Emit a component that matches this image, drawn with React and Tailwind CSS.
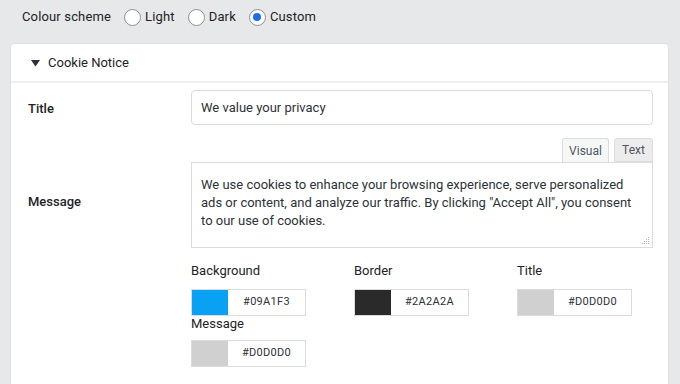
import React from 'react'

function Radio({ label, checked }) {
  return (
    <label className="flex items-center gap-[4px]">
      <span className="w-[17px] h-[17px] rounded-full border border-[#8c8f94] bg-white flex items-center justify-center">
        {checked && <span className="w-[8px] h-[8px] rounded-full bg-[#1d6ee6]" />}
      </span>
      <span>{label}</span>
    </label>
  )
}

function ColourField({ label, color, hex, className = '', boxClass = 'mt-[10px]' }) {
  return (
    <div className={className}>
      <p className="text-[13px] leading-[16px] text-[#1d2327]">{label}</p>
      <div className={`flex ${boxClass} w-[115px] h-[27px] border border-[#dcdcde]`}>
        <span className="w-[36px] h-full" style={{ background: color }} />
        <span className="flex-1 flex items-center justify-center text-[11px] text-[#2c3338] tracking-[0.3px]">
          {hex}
        </span>
      </div>
    </div>
  )
}

export default function App() {
  return (
    <div className="w-[680px] h-[384px] overflow-hidden bg-[#e6e8e9] font-['Roboto',sans-serif] text-[#1d2327]">
      <div className="flex items-center h-[33px] pl-[22px] gap-[13px] text-[13px] tracking-[0.15px] pt-[1px]">
        <span>Colour scheme</span>
        <Radio label="Light" />
        <Radio label="Dark" />
        <Radio label="Custom" checked />
      </div>

      <div className="ml-[10px] mt-[10px] w-[659px] h-[400px] bg-white rounded-[4px] border border-[#e0e0e0]">
        <div className="flex items-center h-[39px] pl-[20px] pt-[1px] border-b-2 border-[#f0f0f1] text-[13px]">
          <svg width="9" height="8" viewBox="0 0 9 8" className="mr-[8px]">
            <path d="M0 1h9L4.5 7.5z" fill="#2c3338" />
          </svg>
          Cookie Notice
        </div>

        <div className="flex pt-[7px]">
          <div className="w-[180px] pl-[17px] pt-[9px] text-[13px] font-medium">Title</div>
          <div className="w-[462px] h-[35px] border border-[#dcdcde] rounded-[4px] flex items-center px-[9px] text-[13px] text-[#2c3338]">
            We value your privacy
          </div>
        </div>

        <div className="flex mt-[13px]">
          <div className="w-[180px] pl-[17px] pt-[54px] text-[13px] font-medium">Message</div>
          <div className="w-[462px]">
            <div className="flex justify-end gap-[5px] text-[12px] text-[#50575e]">
              <span className="w-[47px] h-[25px] flex items-center justify-center bg-[#f6f7f7] border border-b-0 border-[#dcdcde] rounded-t-[3px] -mb-[1px] relative">Visual</span>
              <span className="w-[39px] h-[24px] flex items-center justify-center bg-[#ececec] border border-[#dcdcde] rounded-t-[3px]">Text</span>
            </div>
            <div className="relative h-[86px] border border-[#dcdcde] px-[9px] pt-[13px] text-[13px] leading-[18px] text-[#2c3338]">
              We use cookies to enhance your browsing experience, serve personalized ads or content, and analyze our traffic. By clicking "Accept All", you consent to our use of cookies.
              <svg width="8" height="8" viewBox="0 0 8 8" className="absolute right-[2px] bottom-[2px]">
                <g fill="#b5b5b5">
                  <rect x="6" y="0" width="1" height="1" />
                  <rect x="4" y="2" width="1" height="1" />
                  <rect x="6" y="2" width="1" height="1" />
                  <rect x="2" y="4" width="1" height="1" />
                  <rect x="4" y="4" width="1" height="1" />
                  <rect x="6" y="4" width="1" height="1" />
                  <rect x="0" y="6" width="1" height="1" />
                  <rect x="2" y="6" width="1" height="1" />
                  <rect x="4" y="6" width="1" height="1" />
                  <rect x="6" y="6" width="1" height="1" />
                </g>
              </svg>
            </div>

            <div className="grid grid-cols-[163px_163px_140px] mt-[15px]">
              <ColourField label="Background" color="#09A1F3" hex="#09A1F3" />
              <ColourField label="Border" color="#2A2A2A" hex="#2A2A2A" />
              <ColourField label="Title" color="#D0D0D0" hex="#D0D0D0" />
              <ColourField label="Message" color="#D0D0D0" hex="#D0D0D0" className="mt-[0px]" boxClass="mt-[8px]" />
            </div>
          </div>
        </div>
      </div>
    </div>
  )
}
